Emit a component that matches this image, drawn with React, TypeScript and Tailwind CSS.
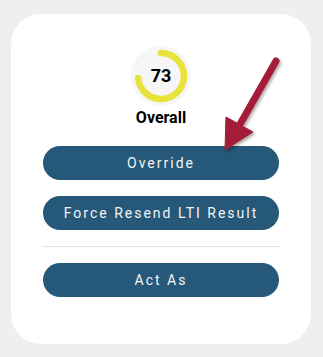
import React from "react";

const Score = ({ value }: { value: number }) => {
  const r = 23;
  const c = 2 * Math.PI * r;
  return (
    <div className="relative w-[60px] h-[60px] rounded-full bg-[#f6f6f6] flex items-center justify-center">
      <svg width="60" height="60" viewBox="0 0 60 60" className="absolute inset-0 -rotate-90">
        <circle
          cx="30"
          cy="30"
          r={r}
          fill="none"
          stroke="#e8e33a"
          strokeWidth="6.5"
          strokeLinecap="round"
          strokeDasharray={`${(value / 100) * c} ${c}`}
        />
      </svg>
      <span className="relative text-[18px] font-bold text-black leading-none">{value}</span>
    </div>
  );
};

const Btn = ({ children }: { children: React.ReactNode }) => (
  <button className="w-full h-[34px] rounded-full bg-[#265879] text-[#f4f4f4] text-[14px] tracking-[2px] leading-none">
    {children}
  </button>
);

export default function App() {
  return (
    <div className="min-h-screen bg-[#efefef] pt-[14px] pl-[11px] font-['Roboto',sans-serif]">
      <div className="relative w-[300px] h-[330px] bg-white rounded-[30px] px-[32px] pt-[32px] flex flex-col items-center">
        <Score value={73} />
        <p className="mt-[2px] text-[16px] font-bold text-black leading-[20px]">Overall</p>
        <div className="w-full mt-[18px] flex flex-col gap-[16px]">
          <Btn>Override</Btn>
          <Btn>Force Resend LTI Result</Btn>
        </div>
        <div className="w-full h-px bg-[#e0e0e0] mt-[16px] mb-[16px]" />
        <div className="w-full">
          <Btn>Act As</Btn>
        </div>

        {/* callout arrow */}
        <svg
          className="absolute left-0 top-0 pointer-events-none"
          width="300"
          height="200"
          viewBox="0 0 300 200"
        >
          <defs>
            <filter id="sh" x="-20%" y="-20%" width="140%" height="140%">
              <feDropShadow dx="1.5" dy="2" stdDeviation="1.5" floodColor="#000" floodOpacity="0.35" />
            </filter>
          </defs>
          <g filter="url(#sh)" fill="#a31d39" stroke="#a31d39">
            <line x1="265" y1="47" x2="228" y2="112" strokeWidth="7" strokeLinecap="round" />
            <polygon points="214,136 215,103 242,118" strokeWidth="1" strokeLinejoin="round" />
          </g>
        </svg>
      </div>
    </div>
  );
}
